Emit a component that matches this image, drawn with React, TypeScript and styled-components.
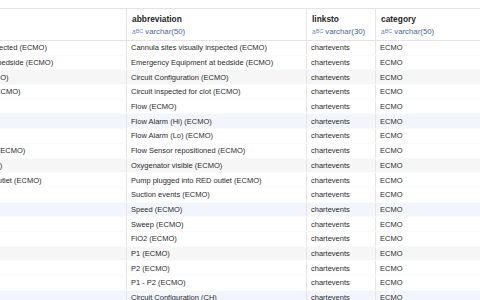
import styled, { createGlobalStyle } from "styled-components";

interface Row {
  label: string;
  abbreviation: string;
  linksto: string;
  category: string;
}

interface Column {
  key: keyof Row;
  title: string;
  type: string;
  width: number;
}

interface StRowProps {
  $tone: "plain" | "gray" | "blue";
}

const columns: Column[] = [
  { key: "label", title: "label", type: "varchar(200)", width: 220 },
  { key: "abbreviation", title: "abbreviation", type: "varchar(50)", width: 180 },
  { key: "linksto", title: "linksto", type: "varchar(30)", width: 69 },
  { key: "category", title: "category", type: "varchar(50)", width: 160 },
];

const labels = [
  "Cannula sites visually inspected (ECMO)",
  "Emergency Equipment at bedside (ECMO)",
  "Circuit Configuration (ECMO)",
  "Circuit inspected for clot (ECMO)",
  "Flow (ECMO)",
  "Flow Alarm (Hi) (ECMO)",
  "Flow Alarm (Lo) (ECMO)",
  "Flow Sensor repositioned (ECMO)",
  "Oxygenator visible (ECMO)",
  "Pump plugged into RED outlet (ECMO)",
  "Suction events (ECMO)",
  "Speed (ECMO)",
  "Sweep (ECMO)",
  "FiO2 (ECMO)",
  "P1 (ECMO)",
  "P2 (ECMO)",
  "P1 - P2 (ECMO)",
  "Circuit Configuration (CH)",
];

const rows: Row[] = labels.map((label) => ({
  label,
  abbreviation: label,
  linksto: "chartevents",
  category: "ECMO",
}));

// every third row is tinted, alternating grey and blue
const toneFor = (i: number): StRowProps["$tone"] => {
  if ((i + 1) % 3 !== 0) return "plain";
  return ((i + 1) / 3) % 2 === 1 ? "gray" : "blue";
};

const TypeIcon = () => (
  <StTypeIcon>
    a<sup>B</sup>
    <sub>C</sub>
  </StTypeIcon>
);

const App = () => {
  return (
    <>
      <GlobalStyle />
      <StPage>
        <StTable>
          <colgroup>
            {columns.map((c) => (
              <col key={c.key} style={{ width: c.width }} />
            ))}
          </colgroup>
          <thead>
            <tr>
              {columns.map((c) => (
                <StHeadCell key={c.key}>
                  <StColTitle>{c.title}</StColTitle>
                  <StColType>
                    <TypeIcon />
                    {c.type}
                  </StColType>
                </StHeadCell>
              ))}
            </tr>
          </thead>
          <tbody>
            {rows.map((r, i) => (
              <StRow key={i} $tone={toneFor(i)}>
                {columns.map((c) => (
                  <StCell key={c.key}>{r[c.key]}</StCell>
                ))}
              </StRow>
            ))}
          </tbody>
        </StTable>
      </StPage>
    </>
  );
};

export default App;

const GlobalStyle = createGlobalStyle`
  html, body {
    margin: 0;
    background: #ffffff;
    font-family: "Liberation Sans", Arial, sans-serif;
  }
`;

const StPage = styled.div`
  width: 480px;
  height: 300px;
  overflow: hidden;
  padding-top: 8px;
  box-sizing: border-box;
`;

const StTable = styled.table`
  margin-left: -94px;
  border-collapse: collapse;
  table-layout: fixed;
  width: 629px;
  color: #2b2b2b;
  font-size: 7.5px;
`;

const StHeadCell = styled.th`
  height: 31px;
  padding: 0 5px;
  text-align: left;
  vertical-align: top;
  border-top: 1px solid #e4e4e4;
  border-bottom: 1px solid #e4e4e4;
  border-left: 1px solid #e6e6e6;
  white-space: nowrap;
  overflow: hidden;
`;

const StColTitle = styled.div`
  font-size: 8.4px;
  font-weight: bold;
  color: #262626;
  margin-top: 5px;
  line-height: 10px;
`;

const StColType = styled.div`
  display: flex;
  align-items: center;
  gap: 2px;
  margin-top: 3px;
  font-size: 7.8px;
  font-weight: normal;
  color: #3e68a8;
  line-height: 10px;
`;

const StTypeIcon = styled.span`
  font-size: 6.5px;
  color: #6b8cc4;
  display: inline-flex;
  align-items: center;
  line-height: 1;

  sup {
    font-size: 5.5px;
    vertical-align: 2px;
  }

  sub {
    font-size: 5.5px;
    vertical-align: -2px;
  }
`;

const StRow = styled.tr<StRowProps>`
  height: 14.7px;
  background: ${(p) =>
    p.$tone === "gray" ? "#f6f6f6" : p.$tone === "blue" ? "#f2f6fc" : "#ffffff"};
`;

const StCell = styled.td`
  padding: 0 4px;
  white-space: nowrap;
  overflow: hidden;
  border-left: 1px solid #e6e6e6;
  border-bottom: 1px solid #fafafa;
  line-height: 13px;
`;
